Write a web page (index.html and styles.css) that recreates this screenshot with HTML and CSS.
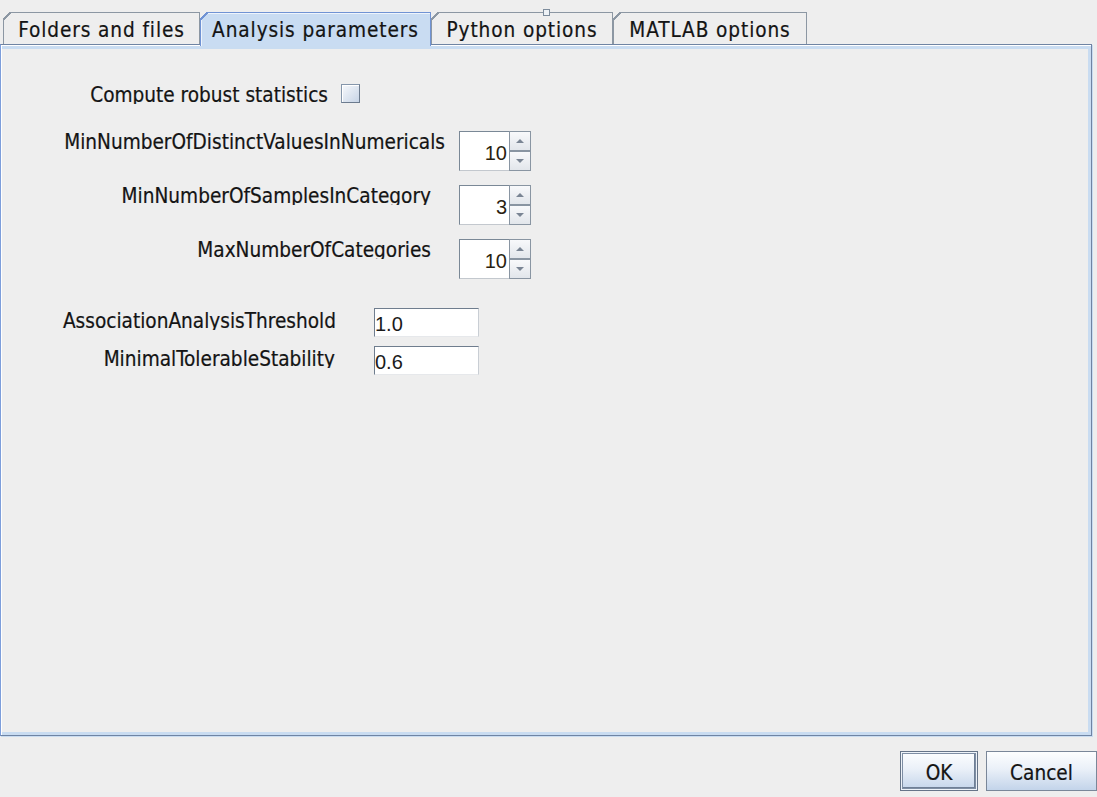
FILE: index.html
```html
<!DOCTYPE html>
<html>
<head>
<meta charset="utf-8">
<title>Analysis parameters</title>
<link rel="stylesheet" href="styles.css">
</head>
<body>
<div class="window">
  <div class="tabs">
    <div class="tab t1">Folders and files</div>
    <div class="tab t2 selected">Analysis parameters</div>
    <div class="tab t3">Python options<span class="handle"></span></div>
    <div class="tab t4">MATLAB options</div>
  </div>
  <div class="panel">
    <div class="form">
      <div class="row row-check">
        <div class="label w-check">Compute robust statistics</div>
        <div class="checkbox"></div>
      </div>
      <div class="row row-spin-first">
        <div class="label w-spin-a">MinNumberOfDistinctValuesInNumericals</div>
        <div class="spinner ml-14">
          <div class="spin-value">10</div>
          <div class="spin-btns"><div class="spin-btn up"></div><div class="spin-btn down"></div></div>
        </div>
      </div>
      <div class="row row-spin">
        <div class="label w-spin-b">MinNumberOfSamplesInCategory</div>
        <div class="spinner ml-28">
          <div class="spin-value">3</div>
          <div class="spin-btns"><div class="spin-btn up"></div><div class="spin-btn down"></div></div>
        </div>
      </div>
      <div class="row row-spin">
        <div class="label w-spin-b">MaxNumberOfCategories</div>
        <div class="spinner ml-28">
          <div class="spin-value">10</div>
          <div class="spin-btns"><div class="spin-btn up"></div><div class="spin-btn down"></div></div>
        </div>
      </div>
      <div class="row row-field-first">
        <div class="label field-label w-field-a">AssociationAnalysisThreshold</div>
        <div class="field ml-38">1.0</div>
      </div>
      <div class="row row-field">
        <div class="label field-label w-field-b">MinimalTolerableStability</div>
        <div class="field ml-39">0.6</div>
      </div>
    </div>
  </div>
  <div class="footer">
    <button class="btn btn-ok">OK</button>
    <button class="btn btn-cancel">Cancel</button>
  </div>
</div>
</body>
</html>
```
FILE: styles.css
```css
html, body {
  margin: 0;
  padding: 0;
}

body {
  background: #eeeeee;
  font-family: "DejaVu Sans Condensed", "DejaVu Sans", sans-serif;
  font-stretch: condensed;
  font-size: 20.6px;
  color: #141414;
  -webkit-text-stroke: 0.2px #141414;
  width: 1097px;
  height: 797px;
  overflow: hidden;
}

/* ---------- tabs ---------- */
.tabs {
  display: flex;
  align-items: flex-start;
  height: 32px;
  padding: 12px 0 0 3px;
}

.tab {
  position: relative;
  box-sizing: border-box;
  height: 32px;
  border: 1px solid #8c97a3;
  border-bottom: none;
  padding-top: 3px;
  line-height: 29px;
  letter-spacing: 0.9px;
  text-align: center;
  white-space: nowrap;
  background: #eeeeee;
  flex: none;
}

.tab::before {
  content: "";
  position: absolute;
  top: -1px;
  left: -1px;
  width: 8px;
  height: 8px;
  background: linear-gradient(135deg, #eeeeee 0 43%, #8c97a3 43% 57%, transparent 57%);
}

.t1 { width: 197px; }
.t2 { width: 231px; }
.t3 { width: 182px; }
.t4 { width: 194px; }

.tab.selected {
  z-index: 1;
  height: 34px;
  background: #c9dcf2;
  border-color: #7093d4;
  box-shadow: inset 1px 1px 0 #eef4fc;
}

.tab.selected::before {
  background: linear-gradient(135deg, #eeeeee 0 43%, #7093d4 43% 57%, transparent 57%);
}

.handle {
  position: absolute;
  left: 111px;
  top: -4px;
  width: 7px;
  height: 7px;
  box-sizing: border-box;
  border: 1px solid #7d8c9c;
  background: #eef2f6;
}

/* ---------- panel ---------- */
.panel {
  box-sizing: border-box;
  width: 1092px;
  height: 692px;
  border: 1px solid #6f84a3;
  border-left-color: #7d9edb;
  box-shadow:
    inset 1px 1px 0 #ffffff,
    inset 0 4px 0 #c9dcf1,
    inset -3px 0 0 #c9dcf1,
    inset 0 -3px 0 #c9dcf1,
    1px 1px 0 #c9dcf1;
}

.form {
  padding-top: 39px;
}

.row {
  display: flex;
  align-items: flex-start;
}

.row-spin-first { margin-top: 27px; }
.row-spin { margin-top: 14px; }
.row-field-first { margin-top: 29px; }
.row-field { margin-top: 9px; }

.label {
  box-sizing: border-box;
  flex: none;
  height: 20px;
  line-height: 22px;
  overflow: hidden;
  text-align: right;
  white-space: nowrap;
}

.field-label { margin-top: 2px; }

.w-check { width: 327px; }
.w-spin-a { width: 444px; }
.w-spin-b { width: 430px; }
.w-field-a { width: 335px; }
.w-field-b { width: 334px; }

.ml-14 { margin-left: 14px; }
.ml-28 { margin-left: 28px; }
.ml-38 { margin-left: 38px; }
.ml-39 { margin-left: 39px; }

/* checkbox */
.checkbox {
  flex: none;
  width: 19px;
  height: 19px;
  margin-left: 13px;
  box-sizing: border-box;
  border: 1px solid #8596ab;
  border-right-color: #6c7b8e;
  border-bottom-color: #6c7b8e;
  background: linear-gradient(135deg, #f7f9fc, #c7d4e6);
  box-shadow: inset 1px 1px 0 #ffffff;
}

/* spinner */
.spinner {
  flex: none;
  display: flex;
  width: 72px;
  height: 40px;
}

.spin-value {
  box-sizing: border-box;
  width: 50px;
  height: 40px;
  border-top: 1px solid #7a8896;
  border-left: 1px solid #7a8896;
  border-bottom: 1px solid #c3c8ce;
  background: #ffffff;
  text-align: right;
  padding: 10px 2px 0 0;
  line-height: 23px;
  font-family: "Liberation Sans", Arial, sans-serif;
  font-stretch: normal;
  font-size: 20px;
  color: #2a1f12;
  -webkit-text-stroke: 0;
}

.spin-btns {
  display: flex;
  flex-direction: column;
  width: 22px;
}

.spin-btn {
  box-sizing: border-box;
  height: 20px;
  border: 1px solid #8995a2;
  background: linear-gradient(#f8f9fb, #e2e6eb);
  display: flex;
  align-items: center;
  justify-content: center;
}

.spin-btn::after {
  content: "";
  width: 0;
  height: 0;
  border-left: 4px solid transparent;
  border-right: 4px solid transparent;
}

.spin-btn.up::after {
  border-bottom: 4px solid #7a8594;
}

.spin-btn.down::after {
  border-top: 4px solid #7a8594;
}

/* text field */
.field {
  flex: none;
  box-sizing: border-box;
  width: 105px;
  height: 29px;
  border: 1px solid;
  border-color: #6f7d8e #c9ced4 #e6e8eb #6f7d8e;
  background: #ffffff;
  padding: 5px 0 0 0;
  line-height: 21px;
  font-family: "Liberation Sans", Arial, sans-serif;
  font-stretch: normal;
  font-size: 20px;
  color: #1a1a1a;
  -webkit-text-stroke: 0;
}

/* ---------- footer buttons ---------- */
.footer {
  display: flex;
  justify-content: flex-end;
  gap: 8px;
  padding-top: 15px;
}

.btn {
  box-sizing: border-box;
  height: 40px;
  margin: 0;
  padding: 4px 0 0 0;
  border: 1px solid #7a8799;
  background: linear-gradient(#fdfeff, #eaf0f8 45%, #c3d4ea);
  font-family: inherit;
  font-stretch: condensed;
  font-size: 20.6px;
  line-height: 23px;
  color: #141414;
  -webkit-text-stroke: 0.2px #141414;
  text-align: center;
}

.btn-ok {
  width: 78px;
  border-color: #667488;
  box-shadow: inset 0 0 0 1px #eef3f9, inset 0 0 0 2px #7e8ea4, inset -2px -2px 0 1px #6f7f95;
}

.btn-cancel {
  width: 111px;
}
```
